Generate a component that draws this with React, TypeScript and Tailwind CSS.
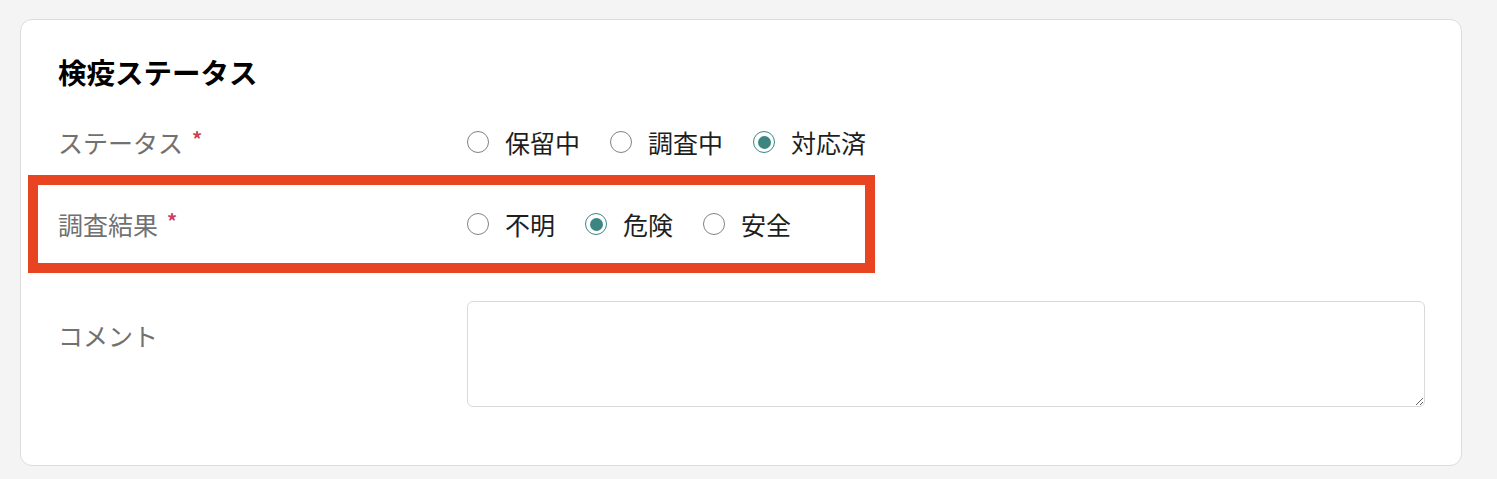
import React from 'react';

type Option = { label: string; checked?: boolean };

const statusOptions: Option[] = [
  { label: '保留中' },
  { label: '調査中' },
  { label: '対応済', checked: true },
];

const resultOptions: Option[] = [
  { label: '不明' },
  { label: '危険', checked: true },
  { label: '安全' },
];

const Radio: React.FC<Option> = ({ label, checked }) => (
  <label className="flex items-center gap-[16px] mr-[30px] cursor-pointer">
    {checked ? (
      <span className="w-[22px] h-[22px] rounded-full border-[1.5px] border-[#3a8883] flex items-center justify-center">
        <span className="w-[13px] h-[13px] rounded-full bg-[#3c8580]" />
      </span>
    ) : (
      <span className="w-[22px] h-[22px] rounded-full border-[1.5px] border-[#828282]" />
    )}
    <span className="text-[25px] leading-[34px] text-[#1e1e1e]">{label}</span>
  </label>
);

const FieldLabel: React.FC<{ text: string; required?: boolean }> = ({ text, required }) => (
  <div className="text-[25px] leading-[36px] text-[#717171] flex items-start">
    {text}
    {required && <span className="ml-[9px] text-[20px] leading-[30px] font-bold text-[#cf3f5b]">*</span>}
  </div>
);

export default function App() {
  return (
    <div
      className="min-h-screen bg-[#f3f4f3] pt-[19px] px-[20px] pb-[13px]"
      style={{ fontFamily: '"Noto Sans CJK JP", "Noto Sans", sans-serif' }}
    >
      <div className="w-[1442px] bg-white border border-[#dcdcdc] rounded-[12px] pl-[37px] pr-[36px] pt-[32px] pb-[58px]">
        <h2 className="text-[28.5px] leading-[40px] font-bold text-black">検疫ステータス</h2>

        <div className="mt-[9px] grid grid-cols-[409px_1fr] h-[82px] items-center">
          <FieldLabel text="ステータス" required />
          <div className="flex items-center">
            {statusOptions.map((o) => (
              <Radio key={o.label} {...o} />
            ))}
          </div>
        </div>

        <div className="relative grid grid-cols-[409px_1fr] h-[82px] items-center">
          <FieldLabel text="調査結果" required />
          <div className="flex items-center">
            {resultOptions.map((o) => (
              <Radio key={o.label} {...o} />
            ))}
          </div>
          {/* highlight annotation */}
          <div className="absolute left-[-30px] top-[-8px] w-[847px] h-[98px] border-[10px] border-[#e84421] pointer-events-none" />
        </div>

        <div className="mt-[36px] grid grid-cols-[409px_1fr]">
          <div className="pt-[16px]">
            <FieldLabel text="コメント" />
          </div>
          <textarea className="h-[106px] w-full border border-[#d9d9d9] rounded-[6px] bg-white px-3 py-2 text-[20px] outline-none" />
        </div>
      </div>
    </div>
  );
}
